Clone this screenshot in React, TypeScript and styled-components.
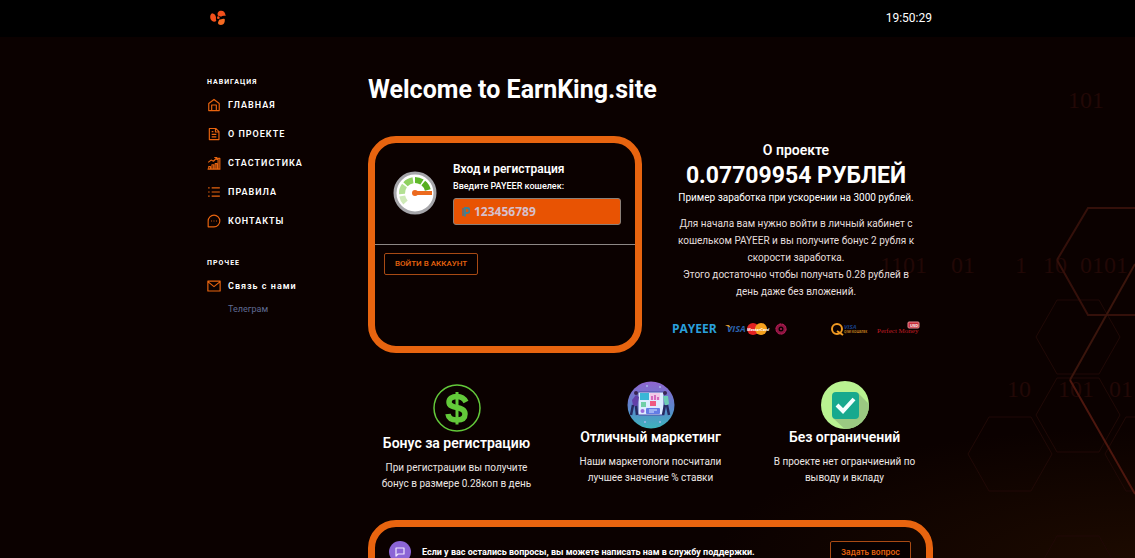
import React from "react";
import styled, { createGlobalStyle } from "styled-components";

const ORANGE = "#e8640f";

const GlobalStyle = createGlobalStyle`
  * { box-sizing: border-box; }
  body {
    margin: 0;
    background: #0b0100;
    color: #fff;
    font-family: Roboto, "Noto Sans", sans-serif;
  }
  h1, h2, h3, p, ul { margin: 0; padding: 0; }
  ul { list-style: none; }
  a { color: inherit; text-decoration: none; }
`;

const Page = styled.div`
  position: relative;
  height: 100vh;
  overflow-x: hidden;
  overflow-y: auto;
  scrollbar-width: none;
  background: radial-gradient(ellipse 420px 130px at 100% 100%, #1c0a00, #0b0100);
`;

const Backdrop = styled.svg`
  position: absolute;
  top: 37px;
  right: 0;
  pointer-events: none;
`;

const Header = styled.header`
  position: relative;
  padding-left: 4px;
  background: #000;
`;

const Container = styled.div`
  max-width: 727px;
  margin: 0 auto;
`;

const HeaderBar = styled(Container)`
  display: flex;
  align-items: center;
  justify-content: space-between;
  height: 37px;
  padding: 0 1px 2px 4px;
`;

const LogoLink = styled.a`
  display: flex;
`;

const Clock = styled.time`
  font: 400 12px/16px Roboto, sans-serif;
`;

const Body = styled.div`
  position: relative;
  padding-left: 4px;
`;

const Columns = styled(Container)`
  display: grid;
  grid-template-columns: 145px minmax(0, 1fr);
  gap: 17px;
`;

const Sidebar = styled.nav`
  display: flex;
  flex-direction: column;
  gap: 29px;
  padding: 40px 0 0 1px;
`;

const NavTitle = styled.h3`
  margin-bottom: 10px;
  font-size: 7px;
  font-weight: 700;
  line-height: 10px;
  letter-spacing: 1px;
  text-transform: uppercase;
`;

const NavList = styled.ul`
  display: flex;
  flex-direction: column;
  gap: 13px;
`;

const NavLink = styled.a`
  display: flex;
  align-items: center;
  gap: 7px;
  height: 16px;
  font-size: 9px;
  font-weight: 600;
  letter-spacing: 1px;
  white-space: nowrap;
  svg { color: ${ORANGE}; flex: none; }
`;

const SubLink = styled.a`
  display: block;
  margin: 9px 0 0 21px;
  color: #5f6a92;
  font-size: 9px;
  line-height: 12px;
`;

const Main = styled.main`
  display: flex;
  flex-direction: column;
`;

const PageTitle = styled.h1`
  padding-top: 36px;
  font-size: 25px;
  font-weight: 700;
  line-height: 34px;
  white-space: nowrap;
`;

const Panels = styled.div`
  display: grid;
  grid-template-columns: repeat(2, minmax(0, 1fr));
  gap: 17px;
  padding-top: 29px;
`;

const Frame = styled.section`
  border: 7px solid ${ORANGE};
  border-radius: 28px;
`;

const LoginCard = styled(Frame)`
  min-height: 217px;
`;

const LoginTop = styled.div`
  display: flex;
  gap: 16px;
  padding: 18px 14px 19px 18px;
  border-bottom: 1px solid #8d8785;
`;

const Gauge = styled.svg`
  flex: none;
  margin-top: 10px;
`;

const Fields = styled.div`
  flex: 1;
  min-width: 0;
`;

const CardTitle = styled.h2`
  font-size: 12px;
  font-weight: 600;
  line-height: 17px;
  white-space: nowrap;
`;

const FieldLabel = styled.label`
  display: block;
  margin-bottom: 3px;
  font-size: 9px;
  font-weight: 500;
  line-height: 17px;
`;

const WalletBox = styled.div`
  display: flex;
  align-items: center;
  gap: 4px;
  height: 27px;
  padding: 0 8px;
  border: 1px solid #8b8078;
  border-radius: 3px;
  background: #e85303;
`;

const WalletInput = styled.input`
  flex: 1;
  min-width: 0;
  padding: 0;
  border: 0;
  outline: 0;
  background: none;
  color: #d6c0cd;
  font: 700 12px/16px "Noto Sans", sans-serif;
  &::placeholder { color: #d6c0cd; opacity: 1; }
`;

const OutlineButton = styled.button<{ $bold?: boolean }>`
  padding: 0 10px;
  border: 1px solid #a84a14;
  border-radius: 2px;
  background: #060000;
  color: ${ORANGE};
  font-family: ${(p) => (p.$bold ? "Inter" : "Roboto")}, sans-serif;
  font-size: 8px;
  font-weight: ${(p) => (p.$bold ? 600 : 500)};
  line-height: 20px;
  white-space: nowrap;
`;

const LoginFoot = styled.div`
  display: flex;
  padding: 8px 9px;
`;

const About = styled.section`
  display: flex;
  flex-direction: column;
  align-items: center;
  padding-top: 4px;
  text-align: center;
  white-space: nowrap;
`;

const SectionTitle = styled.h2`
  font-size: 14px;
  font-weight: 600;
  line-height: 20px;
  white-space: nowrap;
`;

const Amount = styled.p`
  font-size: 23px;
  font-weight: 700;
  line-height: 32px;
`;

const Example = styled.p`
  font-size: 10px;
  line-height: 11px;
`;

const Intro = styled.p`
  margin-top: 12px;
  color: #e4dedd;
  font-size: 10px;
  line-height: 17px;
`;

const Payments = styled.svg`
  margin-top: 20px;
  overflow: visible;
`;

const Features = styled.div`
  display: grid;
  grid-template-columns: repeat(3, minmax(0, 1fr));
  gap: 17px;
  padding-top: 28px;
`;

const Feature = styled.article<{ $low?: boolean }>`
  display: flex;
  flex-direction: column;
  align-items: center;
  padding-top: ${(p) => (p.$low ? 3 : 0)}px;
  text-align: center;
  svg { display: block; margin-bottom: ${(p) => (p.$low ? 1 : -2)}px; }
`;

const FeatureText = styled.p`
  margin-top: 7px;
  color: #ece6e4;
  font-size: 10px;
  line-height: 16px;
  white-space: nowrap;
`;

const Support = styled(Frame)`
  display: flex;
  align-items: center;
  gap: 11px;
  margin-top: 28px;
  padding: 14px 15px 18px 14px;
`;

const SupportText = styled.p`
  flex: 1;
  font-size: 9px;
  font-weight: 700;
  line-height: 20px;
  white-space: nowrap;
`;

const iconPaths: Record<string, React.ReactNode> = {
  home: <path d="M3 9.500 12 2.500l9 7V21.500H3zM8 21v-9h8v9" />,
  file: <path d="M4 2.500h11l5.500 5.500v13.500H4zM14.500 3v5.500H20M8 8h3M8 12.500h8M8 17h8" />,
  stats: <path d="M1 22.500h22M3 22v-4h3v4M8.500 22v-7h3v7M14 22v-9h3v9M19 22V4h3v18M2 11l5-4 4 2 6-6M12.500 2.500H17V7" />,
  list: <path d="M8 5h14M8 12h14M8 19h14M2 5h2.500M2 12h2.500M2 19h2.500" />,
  chat: <path d="M2 22V12a10 10 0 1 1 10 10zM7 12h1.500M11.200 12h1.500M15.500 12H17" />,
  mail: <path d="M1.500 3.500h21v17h-21zM2 5l10 8 10-8" />,
};

const NavIcon = ({ name }: { name: string }) => (
  <svg width="14" height="14" viewBox="0 0 24 24" fill="none" stroke="currentColor" strokeWidth="2" strokeLinejoin="round" aria-hidden="true">
    {iconPaths[name]}
  </svg>
);

const Logo = () => (
  <svg width="16" height="16" viewBox="0 0 48 48" role="img" aria-label="EarnKing">
    <g fill="#f2501c">
      <path d="M24 17C20 8 26 2 34 2c7 0 12 5 13 16-7-1-11 0-14 2-3-2-6-3-9-3z" />
      <path d="M6 10c7 1 11 6 12 12 0 4-1 6 1 10-4 5-13 4-17-4-3-7-1-15 4-18z" />
      <path d="M27 29c6 0 10-4 17-2 2 9-3 18-11 18-5 0-9-2-9-6 0-5 3-6 3-10z" fill="#f56a22" />
      <circle cx="25" cy="23" r="4" />
    </g>
  </svg>
);

const hex = (cx: number, cy: number, r: number) => {
  const h = Math.round(r * 0.87);
  return `M${cx - r} ${cy}l${r / 2}-${h}h${r}l${r / 2} ${h}-${r / 2} ${h}h-${r}z`;
};

const digits: [number, number, string][] = [
  [138, 71, "101"], [-50, 236, "1101"], [21, 236, "01"], [85, 236, "1"], [113, 236, "10"], [150, 236, "0101"],
  [77, 360, "10"], [128, 360, "101"], [179, 360, "01"],
];

const BackdropArt = () => (
  <Backdrop width="205" height="521" viewBox="0 0 205 521" overflow="visible" aria-hidden="true">
    <g fill="#220806" fontFamily="Liberation Serif" fontSize="24">
      {digits.map(([x, y, t]) => <text key={`${x}-${y}`} x={x} y={y}>{t}</text>)}
    </g>
    <g fill="none" stroke="#200906" strokeWidth="1">
      <path d={hex(148, 300, 42)} />
      <path d={hex(148, 378, 42)} />
      <path d={hex(80, 417, 42)} />
      <path d={hex(217, 417, 42)} />
      <path d={hex(148, 536, 42)} />
    </g>
    <g fill="none" strokeWidth="2">
      <path d="M205 171h-47l-31 52" stroke="#34100a" />
      <path d="M127 223l31 55h47" stroke="#34100a" />
      <path d="M205 227l-65 116" stroke="#3a150c" />
      <path d="M140 343l65 114" stroke="#4d170e" />
    </g>
  </Backdrop>
);

const GaugeArt = () => (
  <Gauge width="44" height="44" viewBox="0 0 44 44" aria-hidden="true">
    <circle cx="22" cy="22" r="20" fill="#fff" stroke="#a5a5a9" strokeWidth="3" />
    <g fill="none" strokeWidth="6">
      <path d="M12.500 31.500A13 13 0 0 1 9.200 25" stroke="#cfeab8" />
      <path d="M9 23a13 13 0 0 1 2.500-8.500" stroke="#b3e093" />
      <path d="M12.500 13.200a13 13 0 0 1 7.500-4" stroke="#8fd160" />
      <path d="M22 9a13 13 0 0 1 7 2.100" stroke="#5fb92b" />
      <path d="M30.300 12a13 13 0 0 1 4.500 7" stroke="#56ae20" />
    </g>
    <path d="M22 22h17" stroke="#ec6a1e" strokeWidth="4" />
    <circle cx="22" cy="22" r="3" fill="#ec6a1e" />
  </Gauge>
);

const PayeerMark = () => (
  <svg width="8" height="10" viewBox="0 0 8 10" fill="none" aria-hidden="true">
    <path d="M1 1v8" stroke="#56717f" strokeWidth="1.500" />
    <path d="M3 9.500V1h2a2.300 2.300 0 0 1 0 5H3" stroke="#3d8296" strokeWidth="1.800" />
  </svg>
);

const PaymentLogos = () => (
  <Payments width="248" height="18" viewBox="0 0 248 18" role="img" aria-label="PAYEER, VISA, MasterCard, QIWI, Perfect Money">
    <text x="0" y="13" fill="#2aa0dc" fontFamily="Open Sans" fontWeight="700" fontSize="12">PAYEER</text>
    <text x="55" y="12" fill="#2a62ae" fontFamily="Open Sans" fontWeight="700" fontStyle="italic" fontSize="9">VISA</text>
    <path d="M53 5h4l2 3z" fill="#d99a28" />
    <circle cx="81" cy="9" r="6" fill="#e32222" />
    <circle cx="89" cy="9" r="6" fill="#f5a11e" />
    <text x="75" y="11" fill="#fff" fontFamily="Open Sans" fontWeight="700" fontStyle="italic" fontSize="4">MasterCard</text>
    <circle cx="109" cy="9" r="4" fill="none" stroke="#8e1440" strokeWidth="3" />
    <circle cx="109" cy="9" r="5" fill="none" stroke="#b32058" strokeWidth="1" strokeDasharray="2 1" />
    <circle cx="109" cy="9" r="1" fill="#b32058" />
    <circle cx="165" cy="9" r="5" fill="none" stroke="#f09a22" strokeWidth="2" />
    <path d="M165 11l6 4" stroke="#f09a22" strokeWidth="2" />
    <text x="172" y="9" fill="#173e83" fontFamily="Open Sans" fontWeight="700" fontStyle="italic" fontSize="6">VISA</text>
    <text x="172" y="13" fill="#c9851f" fontFamily="Open Sans" fontWeight="700" fontSize="3">QIWI КОШЕЛЕК</text>
    <text x="205" y="13" fill="#c01c24" fontFamily="Liberation Serif" fontSize="7">Perfect Money</text>
    <rect x="236" y="2" width="11" height="6" rx="1" fill="#c72c38" stroke="#e98d93" />
    <text x="238" y="7" fill="#fff" fontFamily="Open Sans" fontWeight="700" fontSize="4">USD</text>
  </Payments>
);

const DollarArt = () => (
  <svg width="48" height="48" viewBox="0 0 48 48" aria-hidden="true">
    <circle cx="24" cy="24" r="23" fill="none" stroke="#63c93a" strokeWidth="1.500" />
    <path d="M33 18c-2-4-5-5.500-9-5.500-5 0-8 2-8 5.500C16 26 32 21 32 30c0 4-3 6-8 6-5 0-8.500-2-9-6" fill="none" stroke="#63c93a" strokeWidth="5.500" />
    <path d="M24 8v32.500" stroke="#63c93a" strokeWidth="3" />
  </svg>
);

const MarketingArt = () => (
  <svg width="48" height="48" viewBox="0 0 48 48" aria-hidden="true">
    <defs>
      <linearGradient id="sky" x1="0" y1="0" x2="0" y2="1">
        <stop offset="0" stopColor="#9065cf" />
        <stop offset="0.550" stopColor="#5c85cc" />
        <stop offset="1" stopColor="#3db6bd" />
      </linearGradient>
    </defs>
    <circle cx="24" cy="24" r="23.500" fill="url(#sky)" />
    <rect x="11" y="11" width="26" height="23" rx="1" fill="#dcecff" stroke="#4c4fa8" />
    <rect x="13" y="12" width="9" height="7" fill="#39b6d6" />
    <rect x="23" y="12" width="10" height="7" fill="#f2c9e8" />
    <path d="M25 19v-4M28 19v-5M31 19v-3" stroke="#cb4cae" strokeWidth="1.500" />
    <rect x="14" y="21" width="5" height="5" fill="#70cfa7" />
    <rect x="23" y="20" width="6" height="5" fill="#ef5c82" />
    <rect x="19" y="27" width="14" height="6" rx="1" fill="#637ce5" />
    <path d="M22 29h8M22 31h5" stroke="#d7e6ff" />
    <circle cx="15.500" cy="30" r="2" fill="#9b6add" />
    <path d="M9 14l-4 5 1 6 4 1 2-10z" fill="#6240a8" />
    <path d="M6 24l-2 10M9 25l1 9" stroke="#252a60" strokeWidth="2.500" />
    <circle cx="9" cy="12" r="2" fill="#392552" />
    <path d="M36 15h5l1 8-4 2z" fill="#6ccdb5" />
    <path d="M38 24l-2 10M40 24l2 10" stroke="#252a60" strokeWidth="2.500" />
    <circle cx="38" cy="12" r="2" fill="#392552" />
    <g fill="#a9b8ec"><circle cx="20" cy="5" r="1" /><circle cx="33" cy="6" r="1" /><circle cx="18" cy="41" r="1" /><circle cx="33" cy="41" r="1" /></g>
  </svg>
);

const CheckArt = () => (
  <svg width="48" height="48" viewBox="0 0 48 48" aria-hidden="true">
    <defs><clipPath id="disc"><circle cx="24" cy="24" r="24" /></clipPath></defs>
    <g clipPath="url(#disc)">
      <path d="M0 0h48v48H0z" fill="#b9f391" />
      <path d="M37 12l16 16v24H28L12 37z" fill="#9bc982" />
      <rect x="11" y="11" width="27" height="27" rx="4" fill="#17a98e" />
      <path d="M16 24l6 6 11-12" fill="none" stroke="#f4ffff" strokeWidth="4" />
    </g>
  </svg>
);

const SupportBadge = () => (
  <svg width="22" height="22" viewBox="0 0 22 22" aria-hidden="true">
    <circle cx="11" cy="11" r="11" fill="#8b65d6" />
    <path d="M7 7h8v6H9l-2 2z" fill="none" stroke="#efe6ff" strokeWidth="1.200" strokeLinejoin="round" />
  </svg>
);

const navItems = [
  ["home", "ГЛАВНАЯ"],
  ["file", "О ПРОЕКТЕ"],
  ["stats", "СТАСТИСТИКА"],
  ["list", "ПРАВИЛА"],
  ["chat", "КОНТАКТЫ"],
];

const features = [
  { title: "Бонус за регистрацию", lines: ["При регистрации вы получите", "бонус в размере 0.28коп в день"], art: <DollarArt />, low: true },
  { title: "Отличный маркетинг", lines: ["Наши маркетологи посчитали", "лучшее значение % ставки"], art: <MarketingArt />, low: false },
  { title: "Без ограничений", lines: ["В проекте нет огранчиений по", "выводу и вкладу"], art: <CheckArt />, low: false },
];

export default function App() {
  return (
    <Page>
      <GlobalStyle />
      <BackdropArt />
      <Header>
        <HeaderBar>
          <LogoLink href="#home"><Logo /></LogoLink>
          <Clock>19:50:29</Clock>
        </HeaderBar>
      </Header>
      <Body>
        <Columns>
          <Sidebar>
            <div>
              <NavTitle>Навигация</NavTitle>
              <NavList>
                {navItems.map(([icon, label]) => (
                  <li key={icon}><NavLink href={`#${icon}`}><NavIcon name={icon} />{label}</NavLink></li>
                ))}
              </NavList>
            </div>
            <div>
              <NavTitle>Прочее</NavTitle>
              <NavLink href="#mail"><NavIcon name="mail" />Связь с нами</NavLink>
              <SubLink href="#telegram">Телеграм</SubLink>
            </div>
          </Sidebar>
          <Main>
            <PageTitle>Welcome to EarnKing.site</PageTitle>
            <Panels>
              <LoginCard>
                <LoginTop>
                  <GaugeArt />
                  <Fields>
                    <CardTitle>Вход и регистрация</CardTitle>
                    <FieldLabel htmlFor="wallet">Введите PAYEER кошелек:</FieldLabel>
                    <WalletBox>
                      <PayeerMark />
                      <WalletInput id="wallet" placeholder="123456789" />
                    </WalletBox>
                  </Fields>
                </LoginTop>
                <LoginFoot>
                  <OutlineButton type="button">ВОЙТИ В АККАУНТ</OutlineButton>
                </LoginFoot>
              </LoginCard>
              <About>
                <SectionTitle>О проекте</SectionTitle>
                <Amount>0.07709954 РУБЛЕЙ</Amount>
                <Example>Пример заработка при ускорении на 3000 рублей.</Example>
                <Intro>
                  Для начала вам нужно войти в личный кабинет с<br />
                  кошельком PAYEER и вы получите бонус 2 рубля к<br />
                  скорости заработка.<br />
                  Этого достаточно чтобы получать 0.28 рублей в<br />
                  день даже без вложений.
                </Intro>
                <PaymentLogos />
              </About>
            </Panels>
            <Features>
              {features.map((f) => (
                <Feature key={f.title} $low={f.low}>
                  {f.art}
                  <SectionTitle>{f.title}</SectionTitle>
                  <FeatureText>{f.lines[0]}<br />{f.lines[1]}</FeatureText>
                </Feature>
              ))}
            </Features>
            <Support>
              <SupportBadge />
              <SupportText>Если у вас остались вопросы, вы можете написать нам в службу поддержки.</SupportText>
              <OutlineButton type="button" $bold>Задать вопрос</OutlineButton>
            </Support>
          </Main>
        </Columns>
      </Body>
    </Page>
  );
}
